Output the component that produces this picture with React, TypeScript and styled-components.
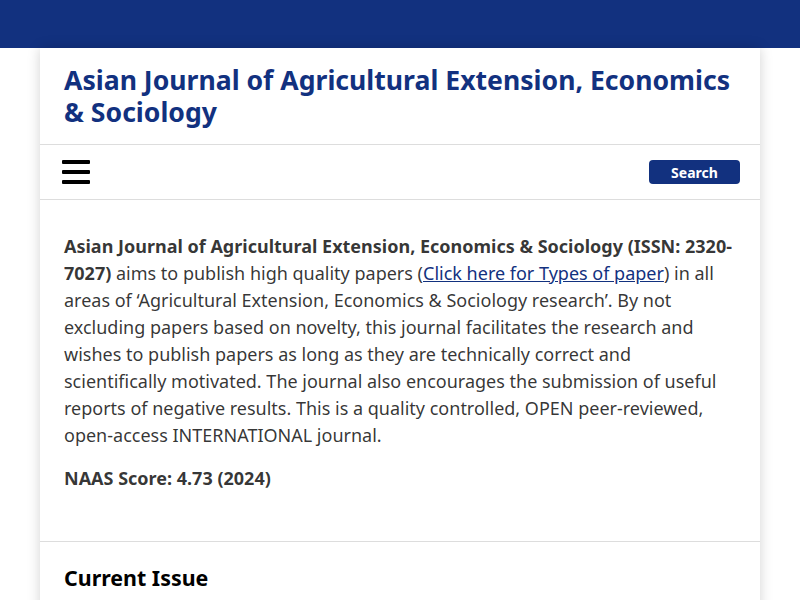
import React from "react";
import styled, { createGlobalStyle } from "styled-components";

const Global = createGlobalStyle`
  html, body { margin: 0; padding: 0; background: #fff; }
  body { font-family: "Noto Sans", "DejaVu Sans", sans-serif; color: rgba(0,0,0,0.8); }
  * { box-sizing: border-box; }
`;

const TopBar = styled.div`
  height: 48px;
  background: #12317f;
`;

const Page = styled.div`
  max-width: 720px;
  margin: 0 auto;
  background: #fff;
  box-shadow: 0 0 12px rgba(0, 0, 0, 0.18);
  min-height: 552px;
`;

const Header = styled.header`
  padding: 16px 24px;
  border-bottom: 1px solid #ddd;
`;

const Title = styled.h1`
  margin: 0;
  font-size: 26.6px;
  line-height: 32px;
  font-weight: 700;
  color: #12317f;
`;

const Nav = styled.nav`
  height: 55px;
  padding: 0 20px 0 22px;
  display: flex;
  align-items: center;
  justify-content: space-between;
  border-bottom: 1px solid #ddd;
`;

const MenuButton = styled.button`
  width: 28px;
  height: 24px;
  padding: 0;
  border: 0;
  background: none;
  display: flex;
  flex-direction: column;
  justify-content: space-between;
  cursor: pointer;
`;

const Bar = styled.span`
  display: block;
  height: 4px;
  border-radius: 1px;
  background: #000;
`;

const SearchButton = styled.button`
  width: 91px;
  height: 24px;
  border: 0;
  border-radius: 4px;
  background: #12317f;
  color: #fff;
  font-family: inherit;
  font-size: 14px;
  font-weight: 700;
  line-height: 25px;
  padding: 0;
`;

const Section = styled.section<{ $top?: number; $bottom?: number }>`
  padding: ${(p) => p.$top ?? 32}px 24px ${(p) => p.$bottom ?? 32}px;
  border-bottom: 1px solid #ddd;
`;

const Para = styled.p`
  margin: 0 0 16px;
  font-size: 18px;
  line-height: 27px;
  color: rgba(0, 0, 0, 0.8);
  &:last-child { margin-bottom: 17px; }
`;

const Link = styled.a`
  color: #12317f;
  text-decoration: underline;
`;

const Heading = styled.h2`
  margin: 0;
  font-size: 21.4px;
  line-height: 30px;
  font-weight: 700;
  color: #000;
`;

export default function App() {
  return (
    <>
      <Global />
      <TopBar />
      <Page>
        <Header>
          <Title>Asian Journal of Agricultural Extension, Economics &amp; Sociology</Title>
        </Header>
        <Nav>
          <MenuButton aria-label="Menu">
            <Bar />
            <Bar />
            <Bar />
          </MenuButton>
          <SearchButton>Search</SearchButton>
        </Nav>
        <Section $top={33} $bottom={32}>
          <Para>
            <strong>Asian Journal of Agricultural Extension, Economics &amp; Sociology (ISSN: 2320-7027)</strong> aims to
            publish high quality papers (<Link href="#">Click here for Types of paper</Link>) in all areas of
            ‘Agricultural Extension, Economics &amp; Sociology research’. By not excluding papers based on novelty, this
            journal facilitates the research and wishes to publish papers as long as they are technically correct and
            scientifically motivated. The journal also encourages the submission of useful reports of negative results.
            This is a quality controlled, OPEN peer-reviewed, open-access INTERNATIONAL journal.
          </Para>
          <Para>
            <strong>NAAS Score: 4.73 (2024)</strong>
          </Para>
        </Section>
        <Section $top={21}>
          <Heading>Current Issue</Heading>
        </Section>
      </Page>
    </>
  );
}
